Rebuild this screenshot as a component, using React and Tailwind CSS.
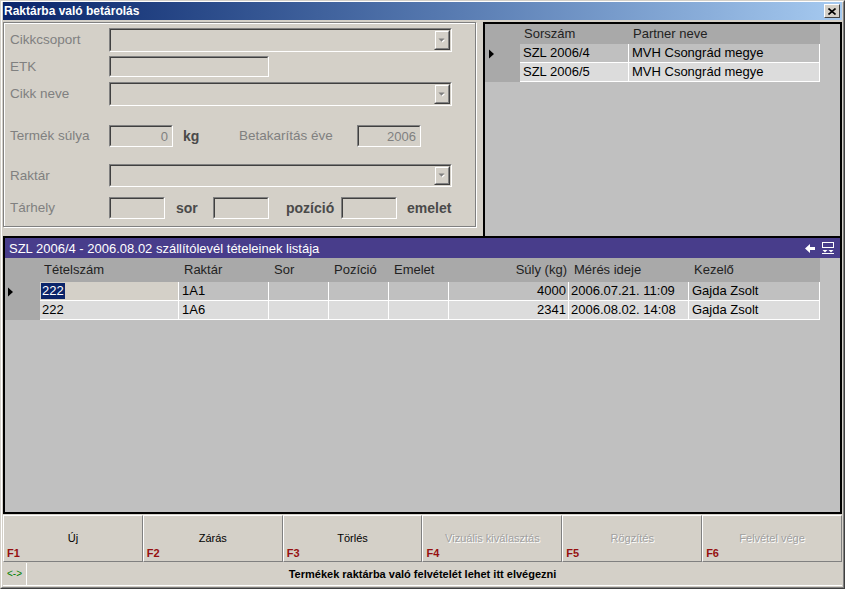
import React from "react";

function Sunken({ className = "", children }) {
  return (
    <div className={"border border-t-[#808080] border-l-[#808080] border-r-white border-b-white " + className}>
      <div className="h-full w-full border border-t-[#404040] border-l-[#404040] border-r-[#d4d0c8] border-b-[#d4d0c8] bg-[#d4d0c8] flex items-center justify-end">
        {children}
      </div>
    </div>
  );
}

function DropBtn() {
  return (
    <div className="w-[16px] h-full border border-t-[#d4d0c8] border-l-[#d4d0c8] border-r-[#404040] border-b-[#404040]">
      <div className="h-full w-full border border-t-white border-l-white border-r-[#808080] border-b-[#808080] bg-[#d4d0c8] flex items-center justify-center">
        <svg width="8" height="5" viewBox="0 0 8 5">
          <path d="M1 1h5L3.5 3.5z" fill="#ffffff" transform="translate(1 1)" />
          <path d="M0.5 0.5h6L3.5 3.8z" fill="#808080" />
        </svg>
      </div>
    </div>
  );
}

function Label({ children }) {
  return <div className="w-[99px] shrink-0 text-[13.5px] text-[#808080] leading-none">{children}</div>;
}

function Tri() {
  return (
    <svg width="6" height="10" viewBox="0 0 6 10">
      <path d="M0 0.5L5 5L0 9.5z" fill="#000" />
    </svg>
  );
}

function FBtn({ label, f, disabled }) {
  return (
    <div className="flex-1 h-full border border-t-white border-l-white border-r-[#808080] border-b-[#808080] bg-[#d4d0c8] flex flex-col">
      <div className="pt-[16px] h-[29px] text-center text-[11px] leading-[13px]">
        {disabled ? (
          <span className="text-[#a0a0a0] [text-shadow:1px_1px_0_#ffffff]">{label}</span>
        ) : (
          <span className="text-black">{label}</span>
        )}
      </div>
      <div className="mt-[3px] pl-[3px] text-[11px] leading-[11px] font-bold text-[#960f0f]">{f}</div>
    </div>
  );
}

export default function App() {
  const mainRows = [
    { t: "222", r: "1A1", s: "4000", m: "2006.07.21. 11:09", k: "Gajda Zsolt", sel: true },
    { t: "222", r: "1A6", s: "2341", m: "2006.08.02. 14:08", k: "Gajda Zsolt", sel: false },
  ];
  return (
    <div className="w-[845px] h-[589px] font-['Liberation_Sans',Arial,sans-serif] border border-t-[#d4d0c8] border-l-[#d4d0c8] border-r-[#404040] border-b-[#404040] bg-[#d4d0c8]">
      <div className="h-full w-full border border-t-white border-l-white border-r-[#808080] border-b-[#808080]">
        <div className="h-full w-full px-[1px] pb-[1px] flex flex-col">
          {/* Title bar */}
          <div className="h-[18px] shrink-0 bg-linear-to-r from-[#0a246a] to-[#a6caf0] flex items-center justify-between pl-[1px] pr-[2px]">
            <div className="text-white font-bold text-[12px] leading-none">Raktárba való betárolás</div>
            <div className="w-[16px] h-[14px] border border-t-white border-l-white border-r-[#404040] border-b-[#404040] bg-[#d4d0c8] flex items-center justify-center">
              <svg width="8" height="7" viewBox="0 0 8 7">
                <path d="M0.5 0.5L7.5 6.5M7.5 0.5L0.5 6.5" stroke="#000" strokeWidth="1.6" />
              </svg>
            </div>
          </div>

          {/* Top section */}
          <div className="mt-[2px] h-[214px] shrink-0 flex">
            {/* Form panel */}
            <div className="w-[473px] h-[205px] border border-[#808080] shadow-[1px_1px_0_#ffffff,inset_1px_1px_0_#ffffff] flex flex-col pl-[6px] pt-[5px]">
              <div className="h-[24px] flex items-center">
                <Label>Cikkcsoport</Label>
                <Sunken className="w-[343px] h-[24px]"><DropBtn /></Sunken>
              </div>
              <div className="mt-[4px] h-[21px] flex items-center">
                <Label>ETK</Label>
                <Sunken className="w-[160px] h-[21px]" />
              </div>
              <div className="mt-[5px] h-[24px] flex items-center">
                <Label>Cikk neve</Label>
                <Sunken className="w-[343px] h-[24px]"><DropBtn /></Sunken>
              </div>
              <div className="mt-[19px] h-[22px] flex items-center">
                <Label>Termék súlya</Label>
                <Sunken className="w-[64px] h-[22px]">
                  <span className="pr-[3px] text-[13px] text-[#808080] leading-none">0</span>
                </Sunken>
                <div className="w-[66px] pl-[10px] text-[14px] font-bold text-[#4a4a4a] leading-none">kg</div>
                <div className="w-[118px] text-[13.5px] text-[#808080] leading-none">Betakarítás éve</div>
                <Sunken className="w-[64px] h-[22px]">
                  <span className="pr-[3px] text-[13px] text-[#808080] leading-none">2006</span>
                </Sunken>
              </div>
              <div className="mt-[17px] h-[23px] flex items-center">
                <Label>Raktár</Label>
                <Sunken className="w-[343px] h-[23px]"><DropBtn /></Sunken>
              </div>
              <div className="mt-[10px] h-[22px] flex items-center">
                <Label>Tárhely</Label>
                <Sunken className="w-[56px] h-[22px]" />
                <div className="w-[48px] pl-[11px] text-[14px] font-bold text-[#4a4a4a] leading-none">sor</div>
                <Sunken className="w-[56px] h-[22px]" />
                <div className="w-[72px] pl-[17px] text-[14px] font-bold text-[#4a4a4a] leading-none">pozíció</div>
                <Sunken className="w-[56px] h-[22px]" />
                <div className="pl-[10px] text-[14px] font-bold text-[#4a4a4a] leading-none">emelet</div>
              </div>
            </div>

            {/* Top grid */}
            <div className="ml-[7px] w-[359px] h-full border-2 border-b-0 border-black bg-[#c0c0c0] flex flex-col text-[13px]">
              <div className="flex h-[20px] shrink-0">
                <div className="w-[35px] bg-[#a9a9a9]" />
                <div className="w-[109px] bg-[#a9a9a9] pl-[4px] flex items-center text-[#222]">Sorszám</div>
                <div className="w-[191px] bg-[#a9a9a9] pl-[4px] flex items-center text-[#222]">Partner neve</div>
              </div>
              {[
                ["SZL 2006/4", "MVH Csongrád megye", "bg-[#c0c0c0]", true],
                ["SZL 2006/5", "MVH Csongrád megye", "bg-[#dcdcdc]", false],
              ].map(([a, b, bg, sel]) => (
                <div key={a} className="flex h-[19px] shrink-0">
                  <div className="w-[35px] bg-[#a9a9a9] flex items-center pl-[4px]">{sel ? <Tri /> : null}</div>
                  <div className={"w-[109px] border-r border-b border-white pl-[3px] flex items-center text-black " + bg}>{a}</div>
                  <div className={"w-[191px] border-r border-b border-white pl-[3px] flex items-center text-black " + bg}>{b}</div>
                </div>
              ))}
            </div>
          </div>

          {/* Middle panel */}
          <div className="h-[278px] shrink-0 border-2 border-black bg-[#c0c0c0] flex flex-col text-[13px]">
            <div className="h-[20px] shrink-0 bg-[#483d8b] flex items-center justify-between pl-[4px] pr-[5px]">
              <div className="text-white leading-none">SZL 2006/4 - 2006.08.02 szállítólevél tételeinek listája</div>
              <div className="flex items-center gap-[7px]">
                <svg width="10" height="9" viewBox="0 0 10 9">
                  <path d="M0 4.5L5 0V3H10V6H5V9z" fill="#ffffff" />
                </svg>
                <svg width="13" height="12" viewBox="0 0 13 12">
                  <rect x="0.5" y="0.5" width="11" height="5" fill="none" stroke="#ffffff" />
                  <path d="M0.5 8H5.5L3 10.5z" fill="#ffffff" />
                  <path d="M6.5 8H11.5L9 10.5z" fill="#ffffff" />
                  <rect x="0" y="11" width="12" height="1" fill="#ffffff" />
                </svg>
              </div>
            </div>
            <div className="flex h-[24px] shrink-0 text-[#222]">
              <div className="w-[35px] bg-[#a9a9a9]" />
              <div className="w-[139px] bg-[#a9a9a9] pl-[4px] flex items-center">Tételszám</div>
              <div className="w-[90px] bg-[#a9a9a9] pl-[5px] flex items-center">Raktár</div>
              <div className="w-[60px] bg-[#a9a9a9] pl-[5px] flex items-center">Sor</div>
              <div className="w-[60px] bg-[#a9a9a9] pl-[5px] flex items-center">Pozíció</div>
              <div className="w-[60px] bg-[#a9a9a9] pl-[5px] flex items-center">Emelet</div>
              <div className="w-[120px] bg-[#a9a9a9] pr-[2px] flex items-center justify-end">Súly (kg)</div>
              <div className="w-[120px] bg-[#a9a9a9] pl-[5px] flex items-center">Mérés ideje</div>
              <div className="w-[131px] bg-[#a9a9a9] pl-[5px] flex items-center">Kezelő</div>
            </div>
            {mainRows.map((row, i) => {
              const bg = row.sel ? "bg-[#c0c0c0]" : "bg-[#dcdcdc]";
              const cell = "border-r border-b border-white flex items-center text-black ";
              return (
                <div key={i} className="flex h-[19px] shrink-0">
                  <div className="w-[35px] bg-[#a9a9a9] flex items-center pl-[3px]">{row.sel ? <Tri /> : null}</div>
                  {row.sel ? (
                    <div className={"w-[139px] pl-[1px] bg-[#d4d0c8] " + cell}>
                      <span className="bg-[#0a246a] text-white px-[1px] leading-[16px]">{row.t}</span>
                    </div>
                  ) : (
                    <div className={"w-[139px] pl-[2px] " + cell + bg}>{row.t}</div>
                  )}
                  <div className={"w-[90px] pl-[3px] " + cell + bg}>{row.r}</div>
                  <div className={"w-[60px] " + cell + bg} />
                  <div className={"w-[60px] " + cell + bg} />
                  <div className={"w-[60px] " + cell + bg} />
                  <div className={"w-[120px] pr-[2px] justify-end " + cell + bg}>{row.s}</div>
                  <div className={"w-[120px] pl-[2px] " + cell + bg}>{row.m}</div>
                  <div className={"w-[131px] pl-[3px] " + cell + bg}>{row.k}</div>
                </div>
              );
            })}
          </div>

          {/* Buttons */}
          <div className="mt-[1px] h-[47px] shrink-0 flex">
            <FBtn label="Új" f="F1" />
            <FBtn label="Zárás" f="F2" />
            <FBtn label="Törlés" f="F3" />
            <FBtn label="Vizuális kiválasztás" f="F4" disabled />
            <FBtn label="Rögzítés" f="F5" disabled />
            <FBtn label="Felvétel vége" f="F6" disabled />
          </div>

          {/* Status bar */}
          <div className="h-[24px] shrink-0 flex border-t border-t-[#d4d0c8] border-b border-b-white">
            <div className="w-[24px] shrink-0 border-r border-white flex items-center justify-center text-[10px] text-[#008000] leading-none">&lt;-&gt;</div>
            <div className="flex-1 pr-[24px] flex items-center justify-center text-[11px] font-bold text-black leading-none">
              Termékek raktárba való felvételét lehet itt elvégezni
            </div>
          </div>
        </div>
      </div>
    </div>
  );
}
